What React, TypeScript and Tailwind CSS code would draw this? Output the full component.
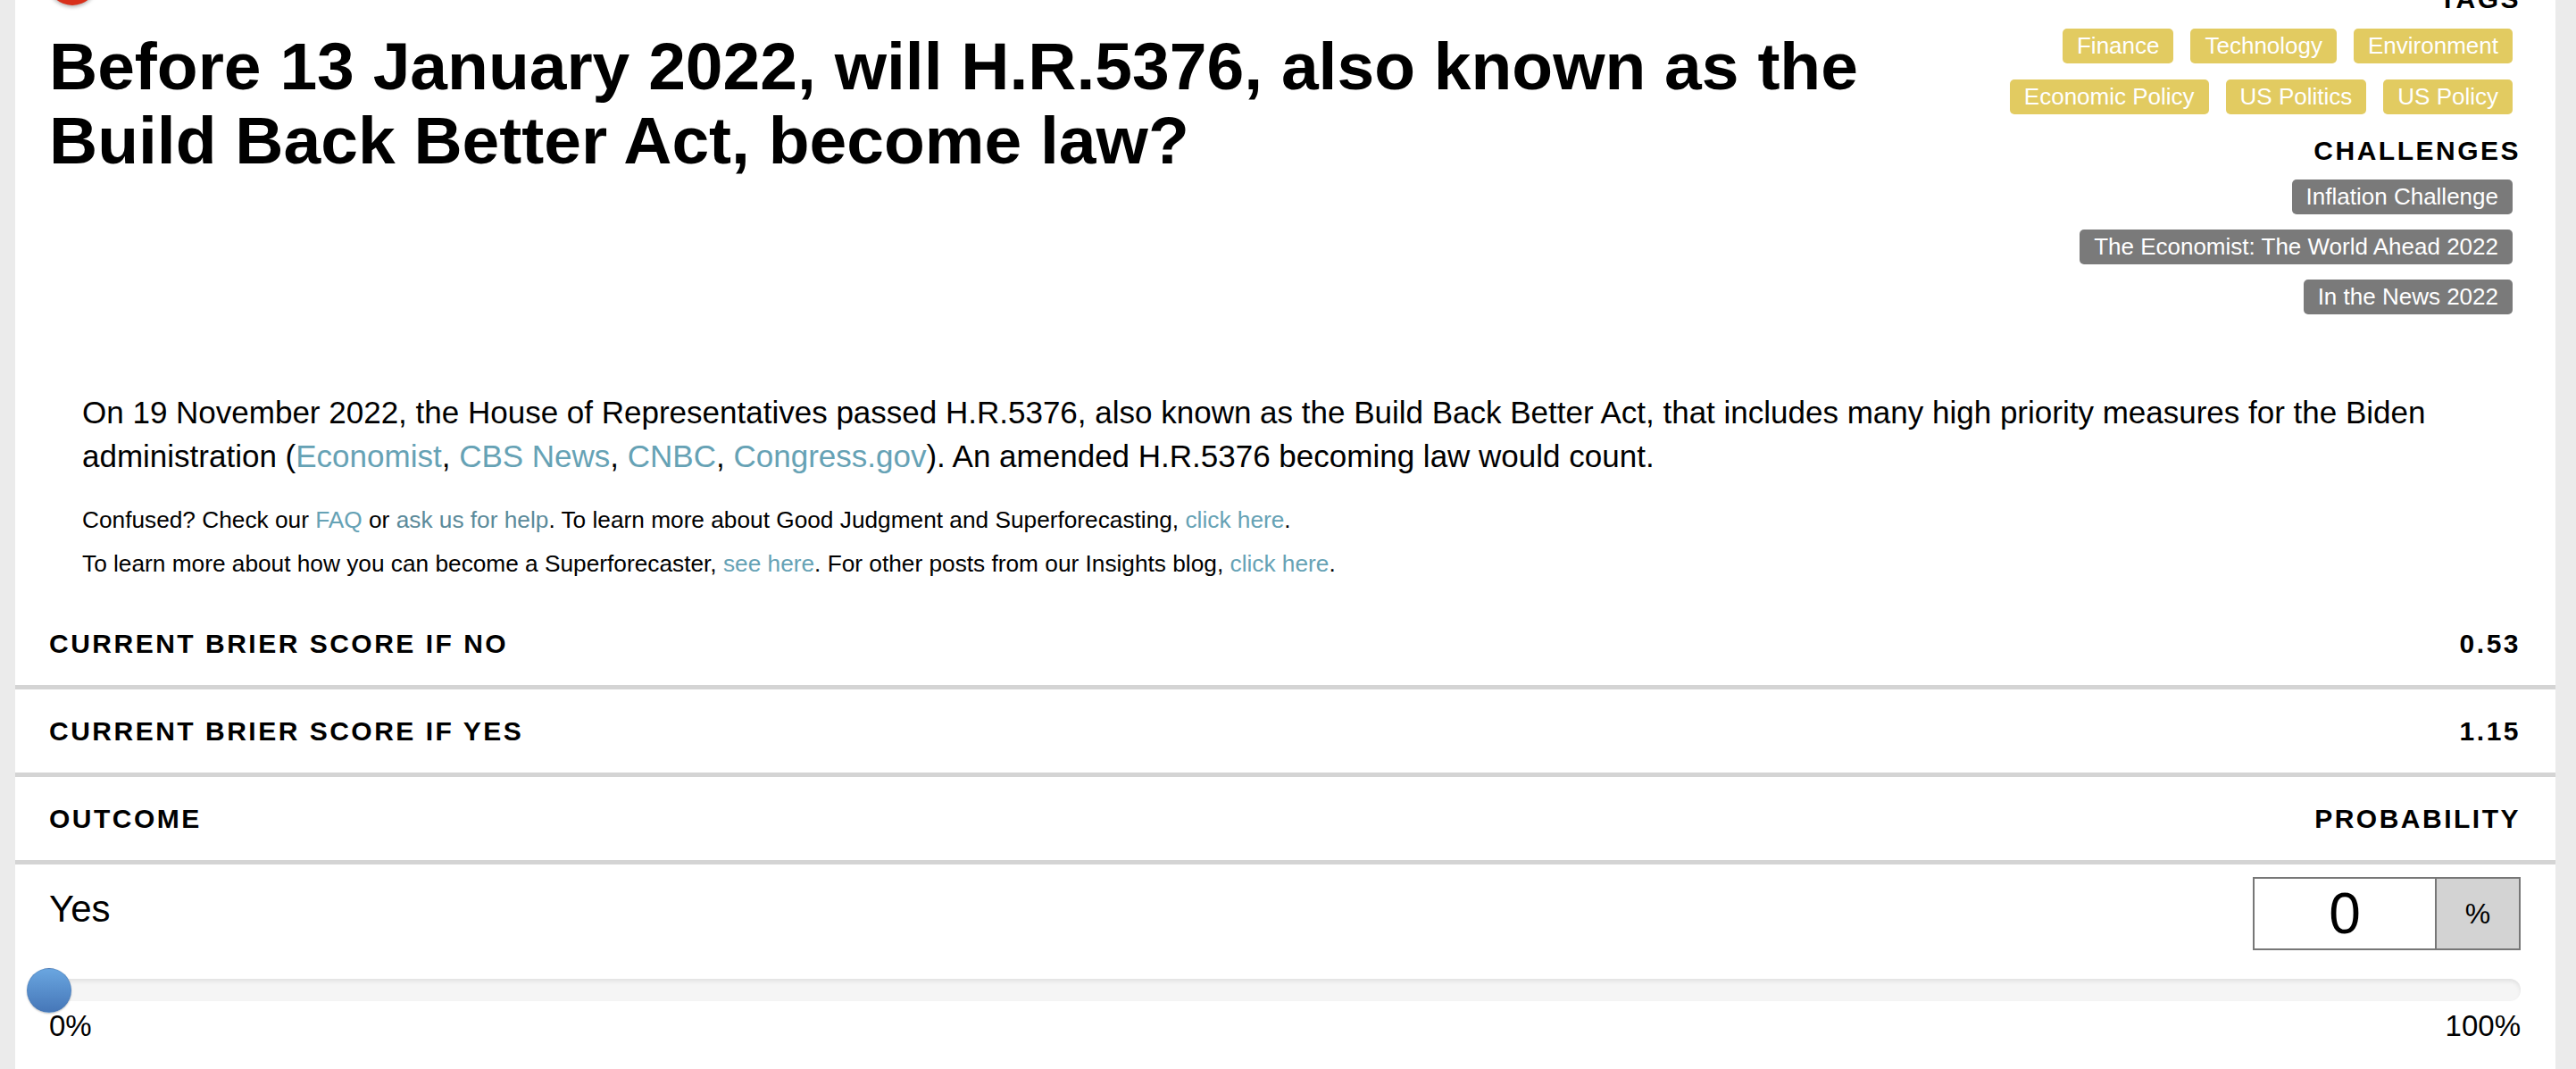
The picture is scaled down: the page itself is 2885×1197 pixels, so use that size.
import React from "react";

const tagRows = [
  ["Finance", "Technology", "Environment"],
  ["Economic Policy", "US Politics", "US Policy"],
] as const;

const challenges = [
  "Inflation Challenge",
  "The Economist: The World Ahead 2022",
  "In the News 2022",
] as const;

const scores = [
  { label: "Current Brier Score if No", value: "0.53" },
  { label: "Current Brier Score if Yes", value: "1.15" },
  { label: "Outcome", value: "Probability" },
] as const;

const linkClass = "text-[#66a2b5]";
const headingClass = "text-[30px] leading-[36px] font-bold uppercase tracking-[2.5px] text-black";

function Pill({ children, tone }: { children: React.ReactNode; tone: "tag" | "challenge" }) {
  return (
    <span
      className={
        tone === "tag"
          ? "inline-flex h-[39px] items-center rounded-[5px] bg-[#e2cb61] px-4 text-[26px] text-white"
          : "inline-flex h-[39px] items-center rounded-[5px] bg-[#7a7a7a] px-4 text-[26px] text-white"
      }
    >
      {children}
    </span>
  );
}

export default function App() {
  return (
    <div className="min-h-screen overflow-hidden bg-[#ebebeb] pl-[17px] pr-[23px] font-['Liberation_Sans',Arial,sans-serif] text-black">
      <div className="relative flex min-h-screen flex-col bg-white">
        {/* status dot, mostly scrolled out of view */}
        <span className="absolute left-[36px] top-[-50px] h-[56px] w-[56px] rounded-full bg-[#d8301b] shadow-[0_2px_4px_rgba(0,0,0,0.3)]" />

        {/* Header: question + tags */}
        <div className="-mt-[19px] flex items-start justify-between pl-[38px] pr-[39px]">
          <h1 className="mt-[52px] max-w-[2150px] text-[75px] font-bold leading-[83px]">
            Before 13 January 2022, will H.R.5376, also known as the Build Back Better Act, become law?
          </h1>

          <div className="flex shrink-0 flex-col items-end">
            <h3 className={headingClass}>Tags</h3>
            <div className="mt-[15px] flex flex-col items-end gap-[18px] pr-[9px]">
              {tagRows.map((row, i) => (
                <div key={i} className="flex gap-[19px]">
                  {row.map((t) => (
                    <Pill key={t} tone="tag">
                      {t}
                    </Pill>
                  ))}
                </div>
              ))}
            </div>

            <h3 className={`mt-[23px] ${headingClass}`}>Challenges</h3>
            <div className="mt-[14px] flex flex-col items-end gap-[17px] pr-[9px]">
              {challenges.map((c) => (
                <Pill key={c} tone="challenge">
                  {c}
                </Pill>
              ))}
            </div>
          </div>
        </div>

        {/* Description */}
        <div className="mt-[85px] pl-[75px] pr-[76px]">
          <p className="text-[35px] leading-[49px]">
            On 19 November 2022, the House of Representatives passed H.R.5376, also known as the Build Back Better
            Act, that includes many high priority measures for the Biden administration (
            <a className={linkClass}>Economist</a>, <a className={linkClass}>CBS News</a>,{" "}
            <a className={linkClass}>CNBC</a>, <a className={linkClass}>Congress.gov</a>). An amended H.R.5376
            becoming law would count.
          </p>
          <p className="mt-[23px] text-[26.25px] leading-[49px]">
            Confused? Check our <a className={linkClass}>FAQ</a> or{" "}
            <a className="text-[#5b8a9a]">ask us for help</a>. To learn more about Good Judgment and
            Superforecasting, <a className={linkClass}>click here</a>.
          </p>
          <p className="text-[26.25px] leading-[49px]">
            To learn more about how you can become a Superforecaster, <a className={linkClass}>see here</a>. For
            other posts from our Insights blog, <a className={linkClass}>click here</a>.
          </p>
        </div>

        {/* Scores */}
        <div className="mt-[18px]">
          {scores.map(({ label, value }) => (
            <div
              key={label}
              className="flex h-[98px] items-center justify-between border-b-[5px] border-[#d4d4d4] pl-[38px] pr-[39px]"
            >
              <span className={headingClass}>{label}</span>
              <span className={headingClass}>{value}</span>
            </div>
          ))}
        </div>

        {/* Forecast input */}
        <div className="pl-[38px] pr-[39px] pt-[14px]">
          <div className="flex items-start justify-between">
            <span className="mt-[11px] text-[42px] leading-[50px]">Yes</span>
            <div className="flex h-[82px] w-[300px] border-2 border-[#777]">
              <span className="flex w-[202px] items-center justify-center bg-white text-[64px] leading-none">0</span>
              <span className="flex flex-1 items-center justify-center border-l-2 border-[#777] bg-[#d3d3d3] text-[32px] leading-none">
                %
              </span>
            </div>
          </div>

          <div className="relative mt-[32px] h-[25px] rounded-[12px] bg-[#f5f5f5] shadow-[inset_0_3px_4px_rgba(0,0,0,0.08)]">
            <span className="absolute left-[-25px] top-[-12.5px] h-[50px] w-[50px] rounded-full border border-[#4a78b0]/40 bg-linear-to-b from-[#6aa6e0] to-[#4677b8] shadow-[0_1px_2px_rgba(0,0,0,0.25)]" />
          </div>

          <div className="mt-[8px] flex justify-between text-[33px] leading-[40px]">
            <span>0%</span>
            <span>100%</span>
          </div>
        </div>
      </div>
    </div>
  );
}
